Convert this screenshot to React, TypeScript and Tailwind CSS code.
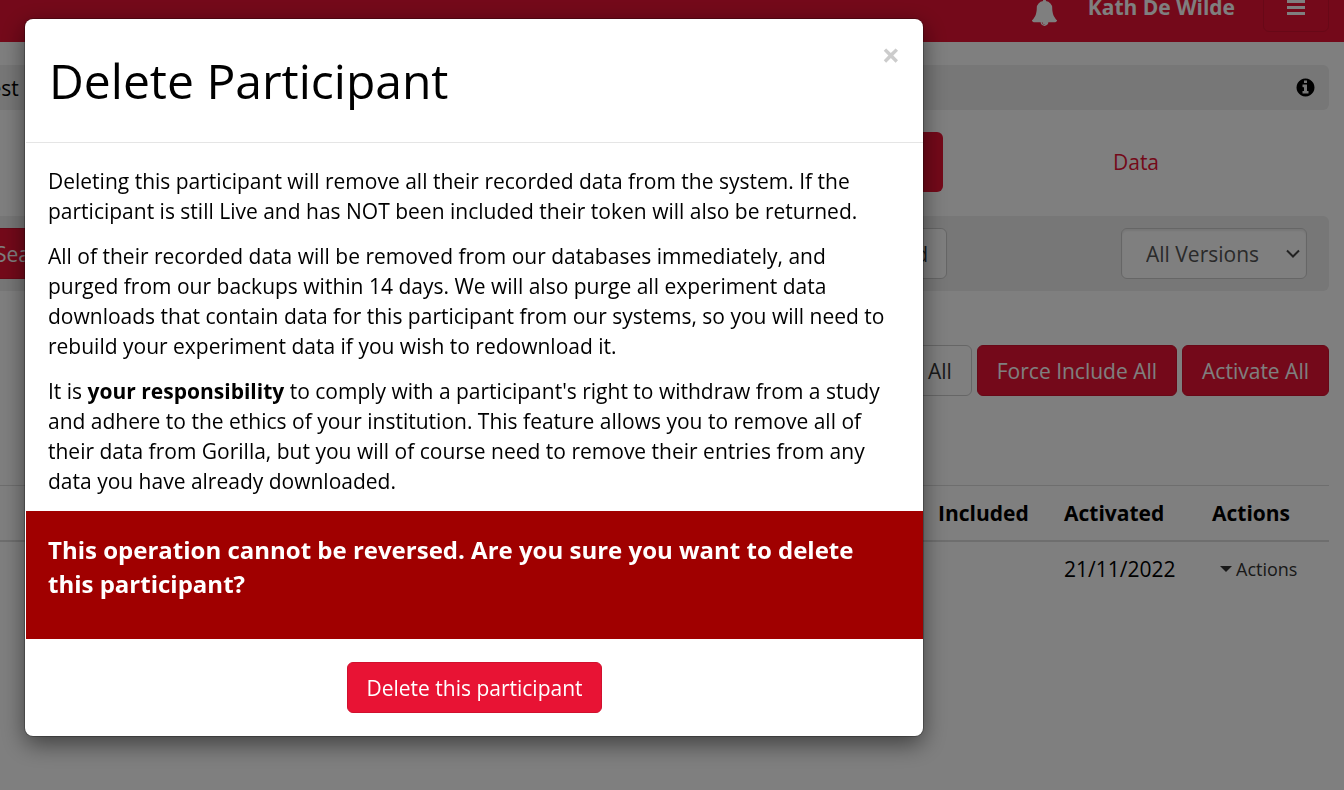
import type { ReactNode } from "react";

const BellIcon = () => (
  <svg viewBox="0 0 1792 1792" className="size-[27px] fill-current" aria-hidden="true">
    <path d="M912 1696q0-16-16-16-59 0-101.5-42.5t-42.5-101.5q0-16-16-16t-16 16q0 73 51.5 124.5t124.5 51.5q16 0 16-16zm816-288q0 52-38 90t-90 38h-448q0 106-75 181t-181 75-181-75-75-181h-448q-52 0-90-38t-38-90q50-42 91-88t85-119.5 74.5-158.5 50-206 19.5-260q0-152 117-282.5t307-158.5q-8-19-8-39 0-40 28-68t68-28 68 28 28 68q0 20-8 39 190 28 307 158.5t117 282.5q0 139 19.5 260t50 206 74.5 158.5 85 119.5 91 88z" />
  </svg>
);

const InfoIcon = () => (
  <svg viewBox="0 0 1792 1792" className="size-[21px] fill-current" aria-hidden="true">
    <path d="M1152 1376v-160q0-14-9-23t-23-9h-96v-512q0-14-9-23t-23-9h-320q-14 0-23 9t-9 23v160q0 14 9 23t23 9h96v320h-96q-14 0-23 9t-9 23v160q0 14 9 23t23 9h448q14 0 23-9t9-23zm-128-896v-160q0-14-9-23t-23-9h-192q-14 0-23 9t-9 23v160q0 14 9 23t23 9h192q14 0 23-9t9-23zm640 416q0 209-103 385.5t-279.5 279.5-385.5 103-385.5-103-279.5-279.5-103-385.5 103-385.5 279.5-279.5 385.5-103 385.5 103 279.5 279.5 103 385.5z" />
  </svg>
);

const MenuIcon = () => (
  <svg viewBox="0 0 18 15" className="h-[15px] w-[18px] fill-current" aria-hidden="true">
    <rect y="0" width="18" height="3" />
    <rect y="6" width="18" height="3" />
    <rect y="12" width="18" height="3" />
  </svg>
);

type ButtonProps = { children: ReactNode; variant?: "primary" | "default" };

const Button = ({ children, variant = "primary" }: ButtonProps) => (
  <button
    type="button"
    className={
      variant === "primary"
        ? "h-[51px] shrink-0 rounded-md border border-[#d0112e] bg-[#e81334] px-[18px] whitespace-nowrap text-white"
        : "h-[51px] shrink-0 rounded-md border border-[#ccc] bg-white px-[18px] whitespace-nowrap text-[#333]"
    }
  >
    {children}
  </button>
);

function ExperimentPage() {
  return (
    <div className="-ml-6">
      <header className="-mt-9 flex items-center justify-end bg-[#e81334] pt-[18px] pr-[15px] pb-[10px] text-white">
        <button type="button" aria-label="Notifications" className="mt-[10px] mr-[30px]">
          <BellIcon />
        </button>
        <span className="mr-7 font-bold">Kath De Wilde</span>
        <button
          type="button"
          aria-label="Menu"
          className="flex h-[50px] w-[66px] items-center justify-center rounded-md border border-[#d0112e]"
        >
          <MenuIcon />
        </button>
      </header>

      <main className="pr-[15px]">
        <div className="mt-[23px] flex h-[45px] items-center justify-between rounded-md bg-[#eee] pr-[13px]">
          <span className="pl-[2px]">Test</span>
          <button type="button" aria-label="Information">
            <InfoIcon />
          </button>
        </div>

        <nav className="mt-[22px] flex justify-end">
          <a href="#participants" className="flex h-[60px] w-[386px] items-center justify-center rounded-md bg-[#e81334] text-white">
            Participants
          </a>
          <a href="#data" className="flex h-[60px] w-[386px] items-center justify-center text-[#e81334]">
            Data
          </a>
        </nav>

        <div className="mt-6 flex items-center justify-between rounded-md bg-[#eee] py-3 pr-[22px]">
          <Button>Search</Button>
          <div className="flex items-center gap-[174px]">
            <Button variant="default">Completed</Button>
            <div className="relative">
              <select
                aria-label="Version"
                className="h-[51px] w-[186px] appearance-none rounded-md border border-[#ccc] bg-white pl-6 text-[#555] shadow-[inset_0_2px_2px_rgba(0,0,0,0.075)]"
              >
                <option>All Versions</option>
              </select>
              <svg
                viewBox="0 0 14 9"
                className="pointer-events-none absolute top-[21px] right-[7px] h-[9px] w-[14px] fill-none stroke-[#444] stroke-2"
                aria-hidden="true"
              >
                <path d="M1 1.5l6 6 6-6" />
              </svg>
            </div>
          </div>
        </div>

        <div className="mt-[54px] flex justify-end gap-[5px] [&>button]:px-[19px]">
          <Button variant="default">Reject All</Button>
          <Button>Force Include All</Button>
          <Button>Activate All</Button>
        </div>

        <table className="mt-[89px] w-full table-fixed border-collapse text-left">
          <thead>
            <tr className="border-t border-b-2 border-t-[#ddd] border-b-[#ddd]">
              <th className="p-3" />
              <th className="w-[126px] p-3">Included</th>
              <th className="w-[148px] p-3">Activated</th>
              <th className="w-[129px] p-3">Actions</th>
            </tr>
          </thead>
          <tbody>
            <tr>
              <td className="p-3" />
              <td className="p-3" />
              <td className="p-3">21/11/2022</td>
              <td className="p-3">
                <button type="button" className="flex items-center gap-1 pl-2 text-[18px] text-[#333]">
                  <svg viewBox="0 0 12 6" className="h-[6px] w-[12px] fill-current" aria-hidden="true">
                    <path d="M0 0h12L6 6z" />
                  </svg>
                  Actions
                </button>
              </td>
            </tr>
          </tbody>
        </table>
      </main>
    </div>
  );
}

function DeleteParticipantDialog() {
  return (
    <div className="fixed inset-0 overflow-hidden bg-black/50 px-[25px] pt-[19px]">
      <div
        role="dialog"
        aria-modal="true"
        aria-labelledby="dialog-title"
        className="max-w-[898px] rounded-lg bg-white py-px pl-px shadow-[0_8px_23px_rgba(0,0,0,0.5)] ring-1 ring-black/25"
      >
        <div className="flex items-start justify-between border-b border-[#e5e5e5] px-[23px] pt-[22px] pb-[23px]">
          <h1 id="dialog-title" className="text-[48px] leading-[77px]">
            Delete Participant
          </h1>
          <button type="button" aria-label="Close" className="text-[32px] leading-[26px] font-bold text-[#ccc]">
            ×
          </button>
        </div>
        <div className="px-[22px] pt-[23px] text-black">
          <p className="mb-[15px]">
            Deleting this participant will remove all their recorded data from the system. If the participant is still
            Live and has NOT been included their token will also be returned.
          </p>
          <p className="mb-[15px]">
            All of their recorded data will be removed from our databases immediately, and purged from our backups
            within 14 days. We will also purge all experiment data downloads that contain data for this participant
            from our systems, so you will need to rebuild your experiment data if you wish to redownload it.
          </p>
          <p className="mb-[15px]">
            It is <strong className="font-bold">your responsibility</strong> to comply with a participant's right to
            withdraw from a study and adhere to the ethics of your institution. This feature allows you to remove all
            of their data from Gorilla, but you will of course need to remove their entries from any data you have
            already downloaded.
          </p>
        </div>
        <div className="bg-[#a00000] px-[22px] pt-[22px] pb-[38px] text-[24px] leading-[34px] font-bold text-white">
          <p>This operation cannot be reversed. Are you sure you want to delete this participant?</p>
        </div>
        <div className="flex justify-center pt-[23px] pb-[22px]">
          <Button>Delete this participant</Button>
        </div>
      </div>
    </div>
  );
}

export default function App() {
  return (
    <div className="min-h-screen overflow-hidden bg-white font-['Open_Sans',sans-serif] text-[21px] leading-[30px] text-black">
      <ExperimentPage />
      <DeleteParticipantDialog />
    </div>
  );
}
